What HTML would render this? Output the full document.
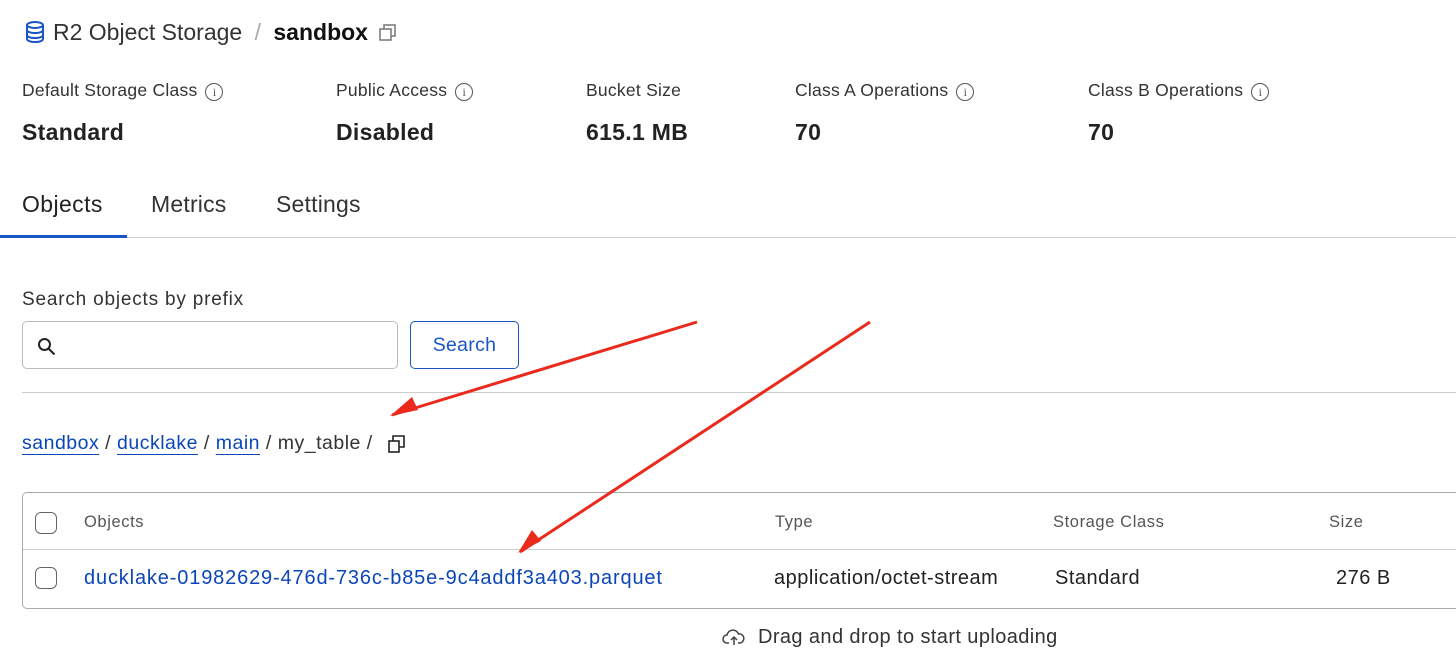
<!DOCTYPE html>
<html><head><style>
body{margin:0;width:1456px;height:667px;background:#fff;font-family:"Liberation Sans",sans-serif;color:#222;position:relative;overflow:hidden}
.a{position:absolute;white-space:nowrap}
.lbl{font-size:17.5px;color:#333;letter-spacing:0.25px}
.val{font-size:23px;font-weight:bold;color:#222;letter-spacing:0.3px}
.info{display:inline-block;width:16px;height:16px;border:1.3px solid #555;border-radius:50%;font-size:12px;text-align:center;line-height:16px;color:#555;margin-left:8px;vertical-align:0px;font-family:"Liberation Serif",serif;letter-spacing:0}
.lnk{color:#0b46b8;text-decoration:underline;text-underline-offset:5px}
.cb{position:absolute;width:20px;height:20px;border:1.5px solid #666;border-radius:6px}
.th{font-size:16.5px;color:#555;letter-spacing:0.6px}
.td{font-size:20px;color:#222;letter-spacing:0.5px}
</style></head><body>
<svg class="a" style="left:24px;top:20px" width="22" height="24" viewBox="0 0 22 24" fill="none" stroke="#1a55c8" stroke-width="2"><ellipse cx="11" cy="5" rx="8" ry="3"/><path d="M3 5v14c0 1.7 3.6 3 8 3s8-1.3 8-3V5M3 10c0 1.7 3.6 3 8 3s8-1.3 8-3M3 15c0 1.7 3.6 3 8 3s8-1.3 8-3"/></svg>
<div class="a" style="left:53px;top:19px;font-size:23px;color:#333">R2 Object Storage <span style="color:#aaa;margin:0 6px">/</span> <b style="color:#111">sandbox</b></div>
<svg class="a" style="left:378px;top:23px" width="20" height="20" fill="none" stroke="#777" stroke-width="1.5"><rect x="2" y="6" width="11" height="11"/><path d="M6 6V2h11v11h-4"/></svg>
<div class="a lbl" style="left:22px;top:80px">Default Storage Class<span class="info">i</span></div>
<div class="a lbl" style="left:336px;top:80px">Public Access<span class="info">i</span></div>
<div class="a lbl" style="left:586px;top:80px">Bucket Size</div>
<div class="a lbl" style="left:795px;top:80px">Class A Operations<span class="info">i</span></div>
<div class="a lbl" style="left:1088px;top:80px">Class B Operations<span class="info">i</span></div>
<div class="a val" style="left:22px;top:119px">Standard</div>
<div class="a val" style="left:336px;top:119px">Disabled</div>
<div class="a val" style="left:586px;top:119px">615.1 MB</div>
<div class="a val" style="left:795px;top:119px">70</div>
<div class="a val" style="left:1088px;top:119px">70</div>
<div class="a" style="left:22px;top:191px;font-size:23px;color:#222;letter-spacing:0.4px">Objects</div>
<div class="a" style="left:151px;top:191px;font-size:23px;color:#333;letter-spacing:0.2px">Metrics</div>
<div class="a" style="left:276px;top:191px;font-size:23px;color:#333;letter-spacing:0.2px">Settings</div>
<div class="a" style="left:0;top:237px;width:1456px;height:1px;background:#ccc"></div>
<div class="a" style="left:0;top:235px;width:127px;height:3px;background:#1a55c8"></div>
<div class="a" style="left:22px;top:289px;font-size:19px;color:#333;letter-spacing:0.8px">Search objects by prefix</div>
<div class="a" style="left:22px;top:321px;width:374px;height:46px;border:1px solid #bbb;border-radius:5px"></div>
<svg class="a" style="left:37px;top:337px" width="20" height="20" fill="none" stroke="#222" stroke-width="2"><circle cx="7.5" cy="7.5" r="5.5"/><path d="M11.5 11.5l6 6"/></svg>
<div class="a" style="left:410px;top:321px;width:107px;height:46px;border:1.5px solid #1a55c8;border-radius:5px;color:#1a55c8;font-size:19.5px;text-align:center;line-height:46px;letter-spacing:0.3px">Search</div>
<div class="a" style="left:22px;top:392px;width:1434px;height:1px;background:#ccc"></div>
<div class="a" style="left:22px;top:432px;font-size:19.5px;color:#333;letter-spacing:0.5px"><span class="lnk">sandbox</span> / <span class="lnk">ducklake</span> / <span class="lnk">main</span> / my_table /</div>
<svg class="a" style="left:387px;top:434px" width="20" height="20" fill="none" stroke="#222" stroke-width="1.6"><rect x="2" y="7" width="10" height="11"/><path d="M6 7V2h11v11h-5"/></svg>
<div class="a" style="left:22px;top:492px;width:1450px;height:115px;border:1.5px solid #aaa;border-radius:5px"></div>
<div class="a" style="left:23px;top:549px;width:1433px;height:1px;background:#ccc"></div>
<div class="cb" style="left:35px;top:512px"></div>
<div class="cb" style="left:35px;top:567px"></div>
<div class="a th" style="left:84px;top:513px">Objects</div>
<div class="a th" style="left:775px;top:513px">Type</div>
<div class="a th" style="left:1053px;top:513px">Storage Class</div>
<div class="a th" style="left:1329px;top:513px">Size</div>
<div class="a td" style="left:84px;top:567px;color:#0b46b8;letter-spacing:0.85px">ducklake-01982629-476d-736c-b85e-9c4addf3a403.parquet</div>
<div class="a td" style="left:774px;top:567px">application/octet-stream</div>
<div class="a td" style="left:1055px;top:567px">Standard</div>
<div class="a td" style="left:1336px;top:567px">276 B</div>
<svg class="a" style="left:722px;top:627px" width="24" height="20" fill="none" stroke="#444" stroke-width="1.5"><path d="M7 16H5a4 4 0 010-8 6 6 0 0111.5-1A4.5 4.5 0 0118 16h-2M12 18v-8M9 13l3-3 3 3"/></svg>
<div class="a" style="left:758px;top:626px;font-size:20px;color:#333;letter-spacing:0.4px">Drag and drop to start uploading</div>
<svg class="a" style="left:0;top:0" width="1456" height="667">
<path d="M697 322L392 415" stroke="#ea2a1c" stroke-width="3"/><path d="M870 322L520 552" stroke="#ea2a1c" stroke-width="3"/>
<path d="M390 416l22-19 6 13z" fill="#ea2a1c"/><path d="M518 553l14-23 9 11z" fill="#ea2a1c"/></svg>
</body></html>
